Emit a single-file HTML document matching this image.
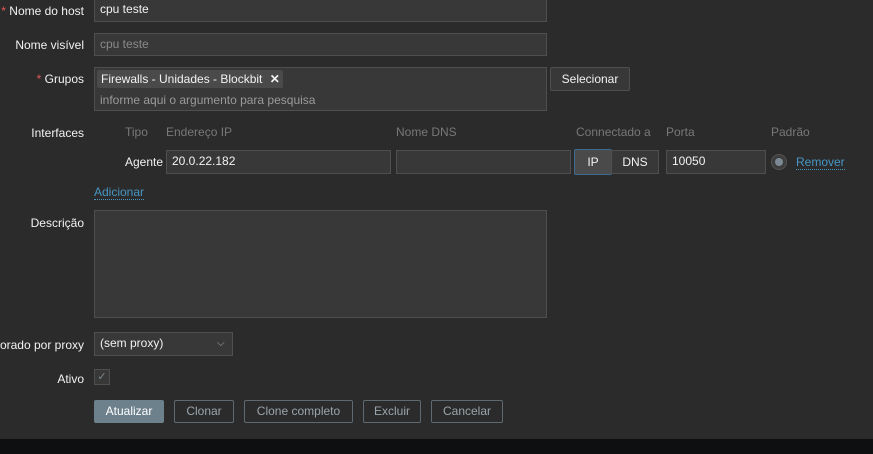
<!DOCTYPE html><html><head><style>
body{margin:0;width:873px;height:454px;background:#2b2b2b;font-family:"Liberation Sans",Arial,sans-serif;font-size:12px;color:#f2f2f2;position:relative;overflow:hidden}
.a{position:absolute}
.lbl{position:absolute;right:789px;text-align:right;white-space:nowrap}
.in{position:absolute;background:#383838;border:1px solid #4f4f4f;box-sizing:border-box;padding-left:5px;line-height:21px}
.req{color:#e45959}
.h{position:absolute;color:#787878;top:125px}
.btn{position:absolute;top:400px;height:23px;box-sizing:border-box;border:1px solid #5f6a70;color:#9aa5ab;text-align:center;line-height:21px;border-radius:2px}
</style></head><body>
<div class="lbl" style="top:4px"><span class="req">* </span>Nome do host</div>
<div class="in" style="left:94px;top:-2px;width:453px;height:24px">cpu teste</div>
<div class="lbl" style="top:38px">Nome visível</div>
<div class="in" style="left:94px;top:33px;width:453px;height:23px;color:#8a8a8a">cpu teste</div>
<div class="lbl" style="top:72px"><span class="req">* </span>Grupos</div>
<div class="in" style="left:94px;top:67px;width:453px;height:44px;padding:0"></div>
<div class="a" style="left:97px;top:70px;width:186px;height:18px;background:#4a4a4a;border-radius:2px;line-height:18px;padding-left:4px;box-sizing:border-box">Firewalls - Unidades - Blockbit <b style="margin-left:4px">✕</b></div>
<div class="a" style="left:100px;top:93px;color:#9a9a9a">informe aqui o argumento para pesquisa</div>
<div class="a" style="left:550px;top:67px;width:80px;height:24px;box-sizing:border-box;border:1px solid #4f4f4f;background:#383838;border-radius:2px;text-align:center;line-height:22px">Selecionar</div>
<div class="lbl" style="top:126px">Interfaces</div>
<div class="h" style="left:125px">Tipo</div><div class="h" style="left:166px">Endereço IP</div><div class="h" style="left:396px">Nome DNS</div><div class="h" style="left:576px">Connectado a</div><div class="h" style="left:666px">Porta</div><div class="h" style="left:771px">Padrão</div>
<div class="a" style="left:125px;top:155px">Agente</div>
<div class="in" style="left:166px;top:150px;width:225px;height:24px">20.0.22.182</div>
<div class="in" style="left:396px;top:150px;width:175px;height:24px"></div>
<div class="a" style="left:574px;top:149px;width:38px;height:26px;box-sizing:border-box;background:#4a4a4a;border:1px solid #3e6b8f;border-radius:2px;text-align:center;line-height:24px">IP</div>
<div class="a" style="left:611px;top:150px;width:48px;height:24px;box-sizing:border-box;border:1px solid #4f4f4f;background:#383838;text-align:center;line-height:22px">DNS</div>
<div class="in" style="left:666px;top:150px;width:100px;height:24px">10050</div>
<div class="a" style="left:771px;top:154px;width:16px;height:16px;border-radius:50%;background:#3c3c3c;box-sizing:border-box;border:1px solid #555"><div class="a" style="left:3px;top:3px;width:8px;height:8px;border-radius:50%;background:#7b8a94"></div></div>
<div class="a" style="left:796px;top:155px;color:#4796c4;border-bottom:1px dotted #4796c4">Remover</div>
<div class="a" style="left:94px;top:185px;color:#4796c4;border-bottom:1px dotted #4796c4">Adicionar</div>
<div class="lbl" style="top:216px">Descrição</div>
<div class="in" style="left:94px;top:210px;width:453px;height:108px"></div>
<div class="lbl" style="top:338px">orado por proxy</div>
<div class="in" style="left:94px;top:332px;width:139px;height:24px">(sem proxy)<span class="a" style="left:122px;top:0;color:#aaa;font-size:10px">⌵</span></div>
<div class="lbl" style="top:372px">Ativo</div>
<div class="a" style="left:94px;top:369px;width:16px;height:16px;box-sizing:border-box;border:1px solid #4f4f4f;background:#383838;color:#7e8a90;font-size:11px;text-align:center;line-height:14px">✓</div>
<div class="btn" style="left:94px;width:70px;background:#6d818c;border-color:#6d818c;color:#fff">Atualizar</div>
<div class="btn" style="left:174px;width:60px">Clonar</div>
<div class="btn" style="left:244px;width:109px">Clone completo</div>
<div class="btn" style="left:363px;width:58px">Excluir</div>
<div class="btn" style="left:431px;width:72px">Cancelar</div>
<div class="a" style="left:0;top:439px;width:873px;height:15px;background:#0e0f11"></div>
</body></html>
